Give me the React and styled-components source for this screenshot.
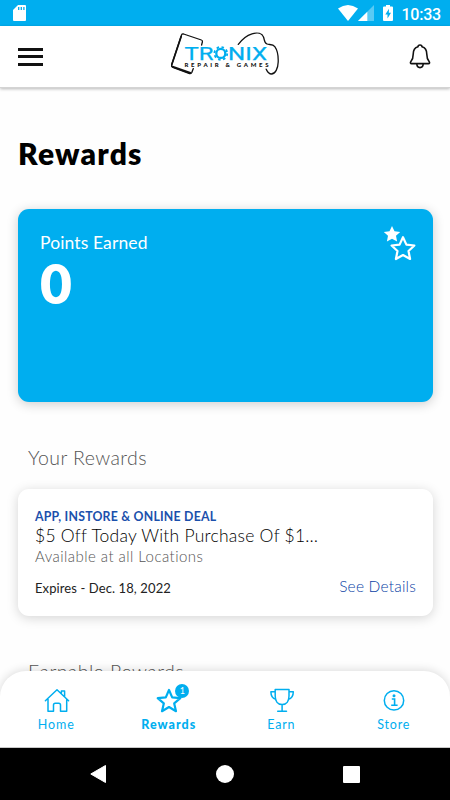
import styled, { createGlobalStyle } from "styled-components";

const BLUE = "#00aeef";

const GlobalStyle = createGlobalStyle`
  * {
    box-sizing: border-box;
  }

  body {
    margin: 0;
    background: #fff;
    font-family: Lato, "Open Sans", sans-serif;
  }

  svg {
    display: block;
  }
`;

const Screen = styled.div`
  width: 450px;
  height: 800px;
  display: flex;
  flex-direction: column;
  overflow: hidden;
  background: #fefefe;
`;

const StatusBar = styled.div`
  flex: none;
  height: 26px;
  padding: 0 9px 0 13px;
  display: flex;
  align-items: center;
  justify-content: space-between;
  background: ${BLUE};
  color: #fff;
`;

const StatusIcons = styled.div`
  display: flex;
  align-items: center;
`;

const SignalGap = styled.span`
  width: 9px;
`;

const Clock = styled.span`
  margin-left: 8px;
  padding-top: 3px;
  font: 500 16px/24px Roboto, sans-serif;
  letter-spacing: -0.2px;
`;

const Header = styled.header`
  flex: none;
  position: relative;
  z-index: 1;
  height: 62px;
  padding: 0 19px 0 18px;
  display: grid;
  grid-template-columns: 25px 1fr 22px;
  align-items: center;
  background: #fff;
  border-bottom: 1px solid #d4d4d4;
  box-shadow: 0 1px 3px rgba(0, 0, 0, 0.28);
`;

const Burger = styled.div`
  height: 18px;
  display: flex;
  flex-direction: column;
  justify-content: space-between;

  span {
    height: 3px;
    background: #111;
  }
`;

const LogoWrapper = styled.div`
  display: flex;
  justify-content: center;
  padding-right: 2px;
  margin-top: -7px;
`;

const Content = styled.main`
  flex: 1;
  min-height: 0;
  overflow: hidden;
  padding: 46px 17px 0 18px;
`;

const Title = styled.h1`
  margin: 0;
  font-size: 30px;
  line-height: 38px;
  font-weight: 800;
  letter-spacing: 1.2px;
  color: #000;
`;

const PointsCard = styled.section`
  height: 193px;
  margin-top: 37px;
  padding: 16px 16px 0 22px;
  display: flex;
  justify-content: space-between;
  align-items: flex-start;
  border-radius: 11px;
  background: ${BLUE};
  color: #fff;
  box-shadow: 0 2px 12px rgba(0, 0, 0, 0.2);
`;

const PointsLabel = styled.div`
  margin-top: 6px;
  font-size: 17.5px;
  line-height: 24px;
  font-weight: 400;
  letter-spacing: 0.12px;
`;

const PointsValue = styled.div`
  margin-top: -1px;
  font-size: 55px;
  line-height: 58px;
  font-weight: 800;
`;

const SectionTitle = styled.h2`
  margin: ${({ $top }) => $top}px 0 0 10px;
  font-size: 19.5px;
  line-height: 24px;
  font-weight: 300;
  letter-spacing: 0.42px;
  color: #555;
`;

const RewardCard = styled.article`
  height: 127px;
  margin-top: 19px;
  padding: 19px 17px 0;
  border-radius: 11px;
  background: #fff;
  box-shadow: 0 2px 12px rgba(0, 0, 0, 0.17);
`;

const RewardTag = styled.div`
  font-size: 12.3px;
  line-height: 18px;
  font-weight: 700;
  letter-spacing: 0.22px;
  color: #1b50ac;
`;

const RewardName = styled.div`
  font-size: 17.5px;
  line-height: 20px;
  font-weight: 300;
  letter-spacing: 0.24px;
  color: #000;
`;

const RewardPlace = styled.div`
  font-size: 15px;
  line-height: 20px;
  font-weight: 300;
  letter-spacing: 0.45px;
  color: #555;
`;

const RewardFooter = styled.div`
  margin-top: 10px;
  display: flex;
  justify-content: space-between;
  align-items: flex-start;
  line-height: 20px;
`;

const Expires = styled.span`
  padding-top: 2px;
  font-size: 13px;
  letter-spacing: 0.1px;
  color: #222;
`;

const Details = styled.span`
  font-size: 15.5px;
  font-weight: 300;
  letter-spacing: 0.2px;
  color: #0a3fa5;
`;

const TabBar = styled.nav`
  flex: none;
  position: relative;
  height: 77px;
  margin-top: -24px;
  padding-top: 16px;
  display: grid;
  grid-template-columns: repeat(4, 1fr);
  border-radius: 26px 26px 0 0;
  border-bottom: 1px solid #c8c8c8;
  background: #fff;
  box-shadow: 0 -1px 10px rgba(0, 0, 0, 0.14);
`;

const Tab = styled.div`
  display: flex;
  flex-direction: column;
  align-items: center;
  color: ${BLUE};
  font-size: 12.5px;
  line-height: 18px;
  font-weight: ${({ $active }) => ($active ? 900 : 400)};
  letter-spacing: ${({ $spacing }) => $spacing}px;
`;

const TabIcon = styled.div`
  height: 29px;
  padding-left: 1px;
  position: relative;
`;

const Badge = styled.span`
  position: absolute;
  top: -3px;
  left: 20px;
  width: 14px;
  height: 14px;
  border-radius: 50%;
  background: ${BLUE};
  color: #fff;
  font-size: 9px;
  line-height: 14px;
  font-weight: 400;
  letter-spacing: 0;
  text-align: center;
`;

const SystemBar = styled.footer`
  flex: none;
  height: 52px;
  padding: 0 90px;
  display: flex;
  align-items: center;
  justify-content: space-between;
  background: #000;
`;

const Logo = () => (
  <svg width="120" height="50" viewBox="165 28 120 50" fill="none">
    <g stroke="#111" strokeLinejoin="round" strokeLinecap="round">
      <path
        d="M201.6 45 L202.4 41.8 Q202.7 40.4 201.4 40 L183.6 34 Q182.1 33.6 181.5 35 L171.6 65 Q171.1 66.8 172.8 67.4 L189.6 73.6 Q191.2 74 191.8 72.6 L193.3 68.6"
        strokeWidth="1.3"
      />
      <path d="M172.5 66.6 L190.4 73" strokeWidth="2" />
      <path d="M181.2 36.5 L171.8 64.5" strokeWidth="1.7" />
      <path
        d="M238.3 44.4 C241.5 40 246 35.6 252 33.8 C257.5 32.2 262.2 33.4 263.6 37.2 C264.6 40.2 264.2 43 267 44 C269.5 44.9 272.8 43.9 274.8 46.6 C277.4 50.2 278.4 56 278.2 62 C278 68.4 275.4 73.8 271.4 74 C268.4 74.1 267.4 71.5 266.2 69.2"
        strokeWidth="1.3"
      />
    </g>
    <g fill={BLUE} fontFamily="Roboto, sans-serif" fontWeight="400" fontSize="18" stroke={BLUE} strokeWidth="0.25">
      <text x="184.5" y="59.8" textLength="29" lengthAdjust="spacingAndGlyphs">
        TR
      </text>
      <text x="228" y="59.8" textLength="39" lengthAdjust="spacingAndGlyphs">
        NIX
      </text>
    </g>
    <circle cx="220.8" cy="53.4" r="4.5" stroke={BLUE} strokeWidth="2.3" />
    <circle
      cx="220.8"
      cy="53.4"
      r="6.4"
      stroke={BLUE}
      strokeWidth="1.8"
      strokeDasharray="2.51 2.51"
    />
    <text
      x="184.5"
      y="66.8"
      fill="#111"
      fontFamily="Lato, sans-serif"
      fontWeight="900"
      fontSize="6"
      textLength="84"
    >
      REPAIR &amp; GAMES
    </text>
  </svg>
);

const SdCard = () => (
  <svg width="13" height="16" viewBox="0 0 13 16">
    <path d="M5 0 H12 Q13 0 13 1 V15 Q13 16 12 16 H1 Q0 16 0 15 V5 Z" fill="#fff" />
    <path d="M5.7 2 V5 M8.3 2 V5 M10.9 2 V5" stroke={BLUE} strokeWidth="1.3" />
  </svg>
);

const Wifi = () => (
  <svg width="20" height="16" viewBox="0 0 20 16">
    <path d="M0 3.5 Q10 -3.5 20 3.5 L10 16 Z" fill="#fff" />
  </svg>
);

const Signal = () => (
  <svg width="16" height="16" viewBox="0 0 16 16">
    <path d="M0 16 L16 0 V16 Z" fill="#fff" opacity="0.35" />
    <path d="M0 16 L9.3 6.7 V16 Z" fill="#fff" />
  </svg>
);

const Battery = () => (
  <svg width="10" height="16" viewBox="0 0 10 16">
    <path d="M3 0 H7 V1.5 H9 Q10 1.5 10 2.5 V15 Q10 16 9 16 H1 Q0 16 0 15 V2.5 Q0 1.5 1 1.5 H3 Z" fill="#fff" />
    <path d="M6 3.8 L2.3 9.5 H4.5 V13.5 L8 7.8 H5.8 Z" fill={BLUE} />
  </svg>
);

const Bell = () => (
  <svg width="22" height="26" viewBox="0 0 22 26" fill="none" stroke="#111" strokeWidth="1.6" strokeLinejoin="round">
    <path d="M9 2.8 C9 0.4 13 0.4 13 2.8 C16.5 3.8 17.8 6.6 17.8 10.2 C17.8 14.2 18.6 15.8 20.1 17.5 C21 18.6 20.6 19.6 19.4 19.6 H2.6 C1.4 19.6 1 18.6 1.9 17.5 C3.4 15.8 4.2 14.2 4.2 10.2 C4.2 6.6 5.5 3.8 9 2.8 Z" />
    <path d="M7.8 19.8 C8 24.9 14 24.9 14.2 19.8" />
  </svg>
);

const DoubleStar = () => (
  <svg width="34" height="38" viewBox="0 0 34 38">
    <path
      d="M9 1 L11.5 6.2 L17.2 6.9 L13 10.8 L14.1 16.5 L9 13.7 L3.9 16.5 L5 10.8 L0.8 6.9 L6.5 6.2 Z"
      fill="#fff"
    />
    <path
      d="M20 12.2 L23.4 19.6 L31.4 20.5 L25.5 26 L27.1 34 L20 30 L12.9 34 L14.5 26 L8.6 20.5 L16.6 19.6 Z"
      fill={BLUE}
      stroke="#fff"
      strokeWidth="2.2"
      strokeLinejoin="round"
    />
  </svg>
);

const HomeIcon = () => (
  <svg width="26" height="26" viewBox="0 0 26 26" fill="none" stroke="currentColor" strokeWidth="1.5" strokeLinejoin="round" strokeLinecap="round">
    <path d="M1.4 13.8 L13 2.8 L24.6 13.8 M4 12 V24.2 H9.5 V18 Q9.5 16.2 11.3 16.2 H14.7 Q16.5 16.2 16.5 18 V24.2 H22.7 V12 M17.4 7 V4 H20.6 V10" />
  </svg>
);

const StarIcon = () => (
  <svg width="26" height="26" viewBox="0 0 26 26" fill="none" stroke="currentColor" strokeWidth="2.2" strokeLinejoin="round">
    <path d="M13 3 L16.2 10.4 L24.3 11.2 L18.2 16.4 L20 24.2 L13 20 L6 24.2 L7.8 16.4 L1.7 11.2 L9.8 10.4 Z" />
  </svg>
);

const TrophyIcon = () => (
  <svg width="26" height="26" viewBox="0 0 26 26" fill="none" stroke="currentColor" strokeWidth="1.5" strokeLinejoin="round" strokeLinecap="round">
    <path d="M6.2 2.6 H20 V9 C20 14 17.4 17.6 13.1 17.6 C8.8 17.6 6.2 14 6.2 9 Z M6.2 4.8 H1.9 C1.9 8.8 3 11.4 6.8 12.2 M20 4.8 H24.3 C24.3 8.8 23.2 11.4 19.4 12.2 M13.1 17.6 V24 M8.7 24.2 H17.5" />
  </svg>
);

const InfoIcon = () => (
  <svg width="26" height="26" viewBox="0 0 26 26" fill="none" stroke="currentColor" strokeWidth="1.5">
    <circle cx="13" cy="13.4" r="9.7" />
    <circle cx="13" cy="8.8" r="1.5" fill="currentColor" stroke="none" />
    <path d="M10.8 12 H13.6 V18.1 M10.2 18.3 H16.6" strokeWidth="1.6" />
  </svg>
);

const tabs = [
  { label: "Home", Icon: HomeIcon, spacing: 0.9 },
  { label: "Rewards", Icon: StarIcon, spacing: 1, active: true, badge: 1 },
  { label: "Earn", Icon: TrophyIcon, spacing: 0.8 },
  { label: "Store", Icon: InfoIcon, spacing: 0.8 },
];

export default function App() {
  return (
    <>
      <GlobalStyle />
      <Screen>
        <StatusBar>
          <SdCard />
          <StatusIcons>
            <Wifi />
            <Signal />
            <SignalGap />
            <Battery />
            <Clock>10:33</Clock>
          </StatusIcons>
        </StatusBar>

        <Header>
          <Burger>
            <span />
            <span />
            <span />
          </Burger>
          <LogoWrapper>
            <Logo />
          </LogoWrapper>
          <Bell />
        </Header>

        <Content>
          <Title>Rewards</Title>
          <PointsCard>
            <div>
              <PointsLabel>Points Earned</PointsLabel>
              <PointsValue>0</PointsValue>
            </div>
            <DoubleStar />
          </PointsCard>

          <SectionTitle $top={44}>Your Rewards</SectionTitle>
          <RewardCard>
            <RewardTag>APP, INSTORE &amp; ONLINE DEAL</RewardTag>
            <RewardName>$5 Off Today With Purchase Of $1…</RewardName>
            <RewardPlace>Available at all Locations</RewardPlace>
            <RewardFooter>
              <Expires>Expires - Dec. 18, 2022</Expires>
              <Details>See Details</Details>
            </RewardFooter>
          </RewardCard>

          <SectionTitle $top={44}>Earnable Rewards</SectionTitle>
        </Content>

        <TabBar>
          {tabs.map(({ label, Icon, spacing, active, badge }) => (
            <Tab key={label} $active={active} $spacing={spacing}>
              <TabIcon>
                <Icon />
                {badge && <Badge>{badge}</Badge>}
              </TabIcon>
              {label}
            </Tab>
          ))}
        </TabBar>

        <SystemBar>
          <svg width="16" height="18" viewBox="0 0 16 18">
            <path d="M15.5 0.5 V17.5 L0.8 9 Z" fill="#fff" stroke="#fff" strokeLinejoin="round" />
          </svg>
          <svg width="18" height="18" viewBox="0 0 18 18">
            <circle cx="9" cy="9" r="9" fill="#fff" />
          </svg>
          <svg width="17" height="17" viewBox="0 0 17 17">
            <rect width="17" height="17" rx="1" fill="#fff" />
          </svg>
        </SystemBar>
      </Screen>
    </>
  );
}
